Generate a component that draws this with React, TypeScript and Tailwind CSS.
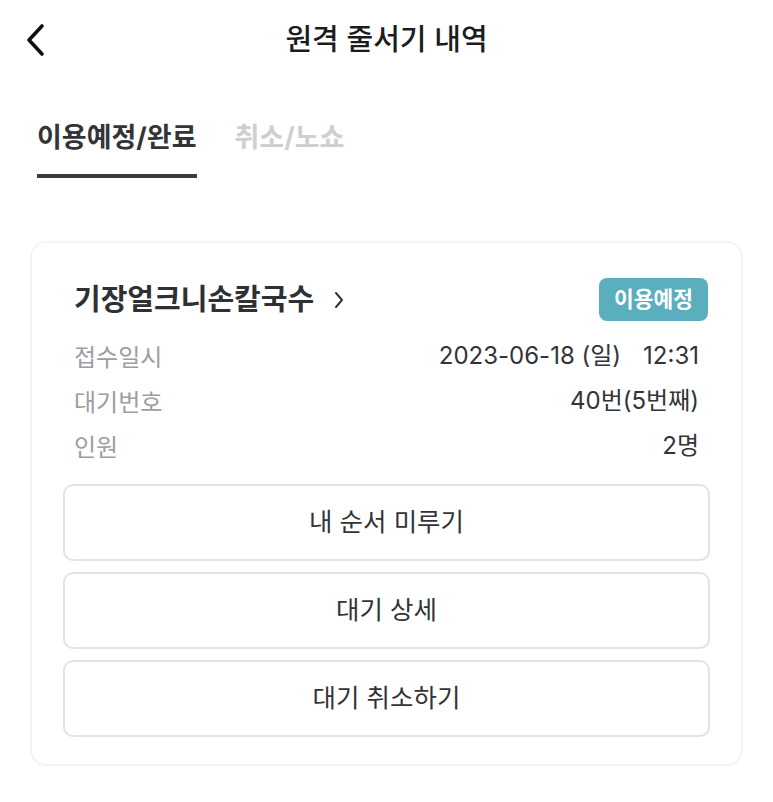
import React from "react";

const font = { fontFamily: 'Inter, "Noto Sans CJK KR", "Noto Sans", sans-serif' };

function Row({ label, children }: { label: string; children: React.ReactNode }) {
  return (
    <div className="flex h-[45px] items-center justify-between px-[11px]">
      <span className="text-[24px] text-[#9d9da2]" style={{ fontFamily: '"Noto Sans CJK KR", sans-serif' }}>
        {label}
      </span>
      <span className="flex items-center text-[24px] text-[#333438]">{children}</span>
    </div>
  );
}

function Btn({ children }: { children: React.ReactNode }) {
  return (
    <button className="flex h-[77px] w-full items-center justify-center rounded-[10px] border-2 border-[#e2e2e7] bg-white text-[25.5px] text-[#333438]">
      {children}
    </button>
  );
}

export default function App() {
  return (
    <div className="min-h-[802px] w-[773px] bg-white" style={font}>
      <header className="relative flex h-[80px] items-center justify-center">
        <button className="absolute left-[20px] top-[22px] flex h-[36px] w-[30px] items-center justify-center">
          <svg width="22" height="34" viewBox="0 0 22 34" fill="none">
            <path d="M18 3 L5 17 L18 31" stroke="#111" strokeWidth="3.6" strokeLinecap="round" strokeLinejoin="round" />
          </svg>
        </button>
        <h1 className="text-[29px] font-medium text-[#1c1c1e]">원격 줄서기 내역</h1>
      </header>

      <nav className="flex gap-[38px] px-[37px] pt-[36px]">
        <div className="flex flex-col">
          <span className="h-[44px] text-[27px] font-bold leading-[44px] text-[#333438]">이용예정/완료</span>
          <div className="mt-[14px] h-[4px] w-full bg-[#3a3b40]" />
        </div>
        <span className="h-[44px] text-[27px] font-bold leading-[44px] text-[#cfcfd3]">취소/노쇼</span>
      </nav>

      <div className="mx-[30px] mt-[63px] rounded-[16px] border-2 border-[#f4f4f6] px-[31px] pb-[27px] pt-[35px]">
        <div className="flex h-[43px] items-center justify-between pl-[11px] pr-[2px]">
          <div className="flex items-center gap-[19px]">
            <span className="text-[29px] font-bold text-[#2f3034]">기장얼크니손칼국수</span>
            <svg width="12" height="20" viewBox="0 0 12 20" fill="none">
              <path d="M3 3 L9 10 L3 17" stroke="#333438" strokeWidth="2" strokeLinecap="round" strokeLinejoin="round" />
            </svg>
          </div>
          <span className="flex h-[43px] items-center rounded-[8px] bg-[#5aaebd] px-[15px] text-[21.5px] font-bold text-white">
            이용예정
          </span>
        </div>
        <div className="mt-[12px]">
          <Row label="접수일시">
            <span>2023-06-18 (일)</span>
            <span className="ml-[22px]">12:31</span>
          </Row>
          <Row label="대기번호">40번(5번째)</Row>
          <Row label="인원">2명</Row>
        </div>
        <div className="mt-[16px] flex flex-col gap-[11px]">
          <Btn>내 순서 미루기</Btn>
          <Btn>대기 상세</Btn>
          <Btn>대기 취소하기</Btn>
        </div>
      </div>
    </div>
  );
}
